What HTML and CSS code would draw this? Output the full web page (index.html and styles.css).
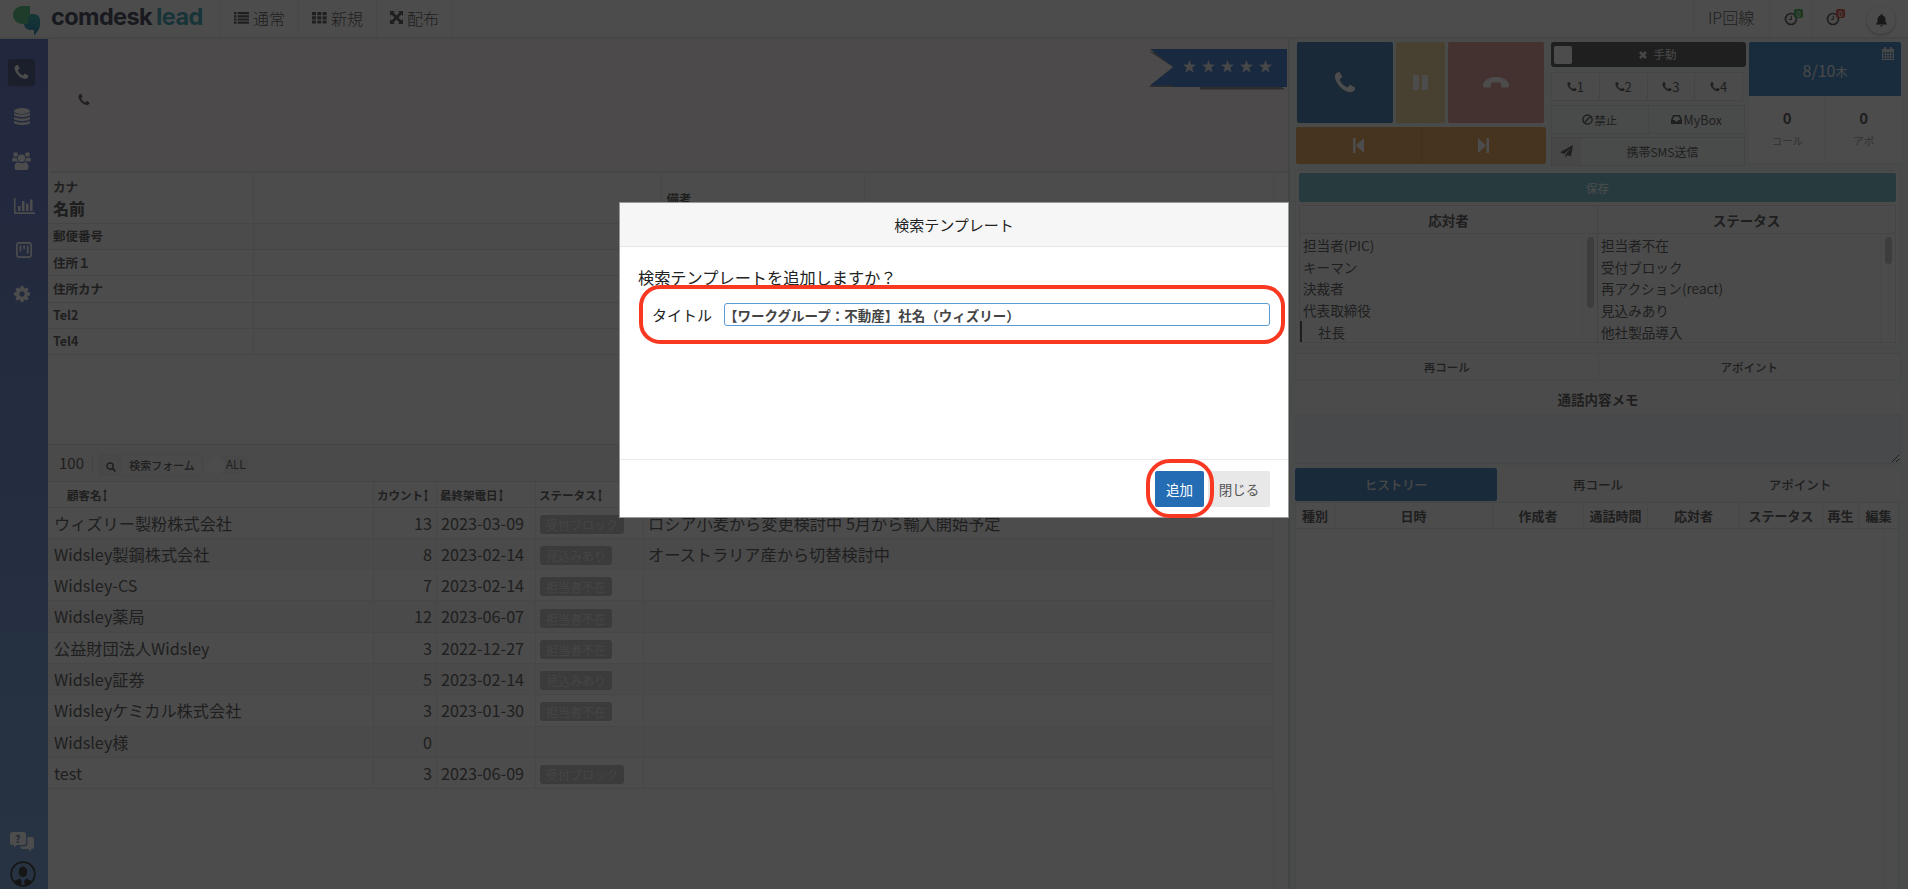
FILE: index.html
```html
<!DOCTYPE html>
<html lang="ja">
<head>
  <meta charset="UTF-8" />
  <title>Comdesk Lead</title>
  <meta name="viewport" content="width=device-width, initial-scale=1" />
  <link rel="stylesheet" href="styles.css">
</head>
<body>

  <svg class="sprite" width="0" height="0">
    <symbol id="i-phone" viewBox="128 128 1536 1536">
      <path d="M1600 1240q0 27-10 70.5t-21 68.5q-21 50-122 106-94 51-186 51-27 0-53-3.5t-57.5-12.5-47-14.5-55.5-20.5-49-18q-98-35-175-83-127-79-264-216t-216-264q-48-77-83-175-3-9-18-49t-20.5-55.5-14.5-47-12.5-57.5-3.5-53q0-92 51-186 56-101 106-122 25-11 68.5-21t70.5-10q14 0 21 3 18 6 53 76 11 19 30 54t35 63.5 31 53.5q3 4 17.5 25t21.5 35.5 7 28.5q0 20-28.5 50t-62 55-62 53-28.5 46q0 9 5 22.5t8.5 20.5 14 24 11.5 19q76 137 174 235t235 174q2 1 19 11.5t24 14 20.5 8.5 22.5 5q18 0 46-28.5t53-62 55-62 50-28.5q14 0 28.5 7t35.5 21.5 25 17.5q25 15 53.5 31t63.5 35 54 30q70 35 76 53 3 7 3 21z"/>
    </symbol>
    <symbol id="i-gear" viewBox="128 128 1536 1536">
      <path d="M1152 896q0-106-75-181t-181-75-181 75-75 181 75 181 181 75 181-75 75-181zm512-109v222q0 12-8 23t-20 13l-185 28q-19 54-39 91 35 50 107 138 10 12 10 25t-9 23q-27 37-99 108t-94 71q-12 0-26-9l-138-108q-44 23-91 38-16 136-29 186-7 28-36 28h-222q-14 0-24.5-8.5t-11.5-21.5l-28-184q-49-16-90-37l-141 107q-10 9-25 9-14 0-25-11-126-114-165-168-7-10-7-23 0-12 8-23 15-21 51-66.5t54-70.5q-27-50-41-99l-183-27q-13-2-21-12.5t-8-23.5v-222q0-12 8-23t19-13l186-28q14-46 39-92-40-57-107-138-10-12-10-24 0-10 9-23 26-36 98.5-107.5t94.5-71.5q13 0 26 10l138 107q44-23 91-38 16-136 29-186 7-28 36-28h222q14 0 24.5 8.5t11.5 21.5l28 184q49 16 90 37l142-107q9-9 24-9 13 0 25 10 129 119 165 170 7 8 7 22 0 12-8 23-15 21-51 66.5t-54 70.5q26 50 41 98l183 28q13 2 21 12.5t8 23.5z"/>
    </symbol>
    <symbol id="i-sort" viewBox="0 0 4 14">
      <path d="M2 0l2 3.2H2.7v7.6H4L2 14 0 10.800h1.300V3.200H0z"/>
    </symbol>
    <symbol id="i-star" viewBox="0 0 12 12">
      <path d="M6 0l1.500 4.100 4.500.200-3.500 2.700 1.200 4.500L6 9l-3.700 2.500 1.200-4.500L0 4.300l4.500-.2z"/>
    </symbol>
    <symbol id="i-clock" viewBox="0 0 14 14">
      <circle cx="7" cy="7" r="5.500" fill="none" stroke="currentColor" stroke-width="1.700"/>
      <path d="M7.300 3.800v3.700H4.800" fill="none" stroke="currentColor" stroke-width="1.200"/>
    </symbol>
  </svg>

  <header class="topbar">
    <div class="logo">
      <svg class="logo-mark" width="28" height="30" viewBox="0 0 28 30">
        <defs>
          <linearGradient id="lg" x1="0" y1="0" x2="0" y2="1">
            <stop offset="0" stop-color="#45b8b4"/>
            <stop offset="1" stop-color="#3f8dbd"/>
          </linearGradient>
        </defs>
        <path d="M17 8h4a6 6 0 0 1 6 6v4c0 5-3 8-6 12v-6h-4a6 6 0 0 1-6-6z" fill="url(#lg)"/>
        <path d="M9 0h8v9a8 8 0 0 1-2 4v5H9A9 9 0 0 1 9 0z" fill="#63c98b"/>
      </svg>
      <span class="logo-name">comdesk</span><span class="logo-lead">lead</span>
    </div>
    <nav class="nav">
      <a class="nav-item">
        <svg width="15" height="12" viewBox="0 0 15 12"><path d="M0 0h2.500v2.200H0zM0 3.200h2.500v2.200H0zM0 6.400h2.500v2.200H0zM0 9.600h2.500v2.200H0zM3.600 0H15v2.200H3.600zM3.600 3.200H15v2.200H3.600zM3.600 6.400H15v2.200H3.600zM3.600 9.600H15v2.200H3.600z"/></svg>
        <span>通常</span>
      </a>
      <a class="nav-item">
        <svg width="15" height="12" viewBox="0 0 15 12"><path d="M0 0h4v3.200H0zM5.300 0h4v3.200h-4zM10.600 0h4v3.200h-4zM0 4.200h4v3.200H0zM5.300 4.200h4v3.200h-4zM10.600 4.200h4v3.200h-4zM0 8.400h4v3.200H0zM5.300 8.400h4v3.200h-4zM10.600 8.400h4v3.200h-4z"/></svg>
        <span>新規</span>
      </a>
      <a class="nav-item">
        <svg width="13" height="13" viewBox="0 0 13 13"><path d="M0 0h5L3.500 1.500l3 3 3-3L8 0h5v5l-1.500-1.500-3 3 3 3L13 8v5H8l1.500-1.500-3-3-3 3L5 13H0V8l1.500 1.500 3-3-3-3L0 5z"/></svg>
        <span>配布</span>
      </a>
    </nav>
    <div class="topbar-right">
      <span class="line-name">IP回線</span>
      <span class="clock"><svg width="14" height="14"><use href="#i-clock"/></svg><b class="count green">0</b></span>
      <span class="clock last"><svg width="14" height="14"><use href="#i-clock"/></svg><b class="count red">0</b></span>
      <span class="bell">
        <svg width="11" height="13" viewBox="0 0 11 13"><path d="M5.500 0c.6 0 1 .4 1 1v.5C8.500 2 9.500 3.500 9.500 5.500V8L11 10v.6H0V10l1.500-2V5.500c0-2 1-3.500 3-4V1c0-.6.4-1 1-1zM4.200 11.200h2.600a1.300 1.300 0 0 1-2.600 0z"/></svg>
      </span>
    </div>
  </header>

  <div class="layout">
    <aside class="sidebar">
      <a class="side-item active"><svg width="15" height="15"><use href="#i-phone"/></svg></a>
      <a class="side-item">
        <svg width="16" height="18" viewBox="0 0 16 18"><ellipse cx="8" cy="3" rx="8" ry="3"/><path d="M0 4.800c2 2.400 14 2.400 16 0v2c-1 3-15 3-16 0zM0 8.800c2 2.400 14 2.400 16 0v2c-1 3-15 3-16 0zM0 12.800c2 2.400 14 2.400 16 0v2c-1 3-15 3-16 0z"/></svg>
      </a>
      <a class="side-item">
        <svg width="19" height="18" viewBox="0 0 19 18"><circle cx="3.600" cy="2.600" r="2.400"/><circle cx="15.400" cy="2.600" r="2.400"/><circle cx="9.500" cy="6.200" r="3.700"/><path d="M2 5.500c1.500.8 2.500.5 3 .3 0 1.800.4 2.900 1.300 3.700H2C.5 9.500 0 8.800 0 8s.5-2.800 2-2.500zM17 5.500c-1.500.8-2.500.5-3 .3 0 1.800-.4 2.900-1.300 3.700H17c1.500 0 2-.7 2-1.500s-.5-2.800-2-2.500zM6 10.200c2 1.400 5 1.400 7 0 2.500 0 3.500 2.500 3.500 5 0 2-1 2.800-2.500 2.800H5c-1.500 0-2.500-.8-2.500-2.800 0-2.500 1-5 3.500-5z"/></svg>
      </a>
      <a class="side-item wide">
        <svg width="21" height="16" viewBox="0 0 21 16"><path d="M0 0h1.500v14.300H21V16H0zM4 8h2.500v5H4zM8 3h2.500v10H8zM12 5.500h2.500V13H12zM16 1.500h2.500V13H16z"/></svg>
      </a>
      <a class="side-item wide">
        <svg width="16" height="16" viewBox="0 0 16 16"><rect x=".9" y=".9" width="14.200" height="14.200" rx="2" fill="none" stroke="currentColor" stroke-width="1.600"/><path d="M3.500 3.500h1.800v6H3.500zM7.200 3.500H9v3.800H7.200zM10.800 3.500h1.800v8h-1.800z"/></svg>
      </a>
      <a class="side-item"><svg width="16" height="16"><use href="#i-gear"/></svg></a>
      <div class="side-bottom">
        <svg width="25" height="19" viewBox="0 0 25 19"><path d="M2.500 0h11A2.500 2.500 0 0 1 16 2.500v8a2.500 2.500 0 0 1-2.500 2.500H7l-3 2.500V13H2.500A2.500 2.500 0 0 1 0 10.500v-8A2.500 2.500 0 0 1 2.500 0z"/><path d="M17.500 5h4A2.500 2.500 0 0 1 24 7.500v7a2.500 2.500 0 0 1-2.500 2.500H21v2.400L18 17h-5.500a2 2 0 0 1-2-2.500h3.500a3.500 3.500 0 0 0 3.500-3.500z"/><text class="help-mark" x="5.300" y="10.500">?</text></svg>
        <svg class="user" width="26" height="26" viewBox="0 0 26 26"><circle cx="13" cy="13" r="11.800" fill="none" stroke="currentColor" stroke-width="1.800"/><ellipse cx="13" cy="10.800" rx="4.300" ry="5.200"/><path d="M4 20c2-1 4-1.500 6-2.500l2 3-1 4c-3-.5-5-2-7-4.500zM22 20c-2-1-4-1.500-6-2.500l-2 3 1 4c3-.5 5-2 7-4.500z"/></svg>
      </div>
    </aside>

    <main class="main">
      <section class="customer-head">
        <svg class="customer-phone" width="12" height="12"><use href="#i-phone"/></svg>
        <div class="ribbon">
          <svg class="ribbon-bg" width="139" height="42" viewBox="0 0 139 42"><path d="M1 3l24 16L1 39h27v-3h110v3H52v2.500h84V40" fill="#999"/><path d="M2 1h137v38H26l-2-1.500H2L25.500 19z" fill="#568cd6"/></svg>
          <div class="stars">
            <svg width="13" height="13"><use href="#i-star"/></svg>
            <svg width="13" height="13"><use href="#i-star"/></svg>
            <svg width="13" height="13"><use href="#i-star"/></svg>
            <svg width="13" height="13"><use href="#i-star"/></svg>
            <svg width="13" height="13"><use href="#i-star"/></svg>
          </div>
        </div>
      </section>

      <section class="detail">
        <div class="detail-row first">
          <div class="d-label"><span>カナ</span><strong>名前</strong></div>
          <div class="d-value"></div>
          <div class="d-label note">備考</div>
          <div class="d-value"></div>
        </div>
        <div class="detail-row alt"><div class="d-label">郵便番号</div><div class="d-value"></div></div>
        <div class="detail-row"><div class="d-label">住所１</div><div class="d-value"></div></div>
        <div class="detail-row"><div class="d-label">住所カナ</div><div class="d-value"></div></div>
        <div class="detail-row"><div class="d-label">Tel2</div><div class="d-value"></div></div>
        <div class="detail-row"><div class="d-label">Tel4</div><div class="d-value"></div></div>
      </section>

      <section class="list-tools">
        <span class="total">100</span>
        <button class="search-btn">
          <span class="search-icon"><svg width="10" height="10" viewBox="0 0 11 11"><circle cx="4.500" cy="4.500" r="3.500" fill="none" stroke="currentColor" stroke-width="1.600"/><path d="M7 7l3.500 3.500" stroke="currentColor" stroke-width="2"/></svg></span>
          <span class="search-label">検索フォーム</span>
        </button>
        <span class="all-toggle"><i></i>ALL</span>
      </section>

      <table class="list">
        <colgroup><col class="c-name"><col class="c-count"><col class="c-date"><col class="c-status"><col></colgroup>
        <thead>
          <tr>
            <th class="th-name">顧客名<svg width="4" height="13"><use href="#i-sort"/></svg></th>
            <th>カウント<svg width="4" height="13"><use href="#i-sort"/></svg></th>
            <th>最終架電日<svg width="4" height="13"><use href="#i-sort"/></svg></th>
            <th>ステータス<svg width="4" height="13"><use href="#i-sort"/></svg></th>
            <th></th>
          </tr>
        </thead>
        <tbody>
          <tr><td>ウィズリー製粉株式会社</td><td class="num">13</td><td>2023-03-09</td><td><span class="tag">受付ブロック</span></td><td>ロシア小麦から変更検討中 5月から輸入開始予定</td></tr>
          <tr><td>Widsley製鋼株式会社</td><td class="num">8</td><td>2023-02-14</td><td><span class="tag">見込みあり</span></td><td>オーストラリア産から切替検討中</td></tr>
          <tr><td>Widsley-CS</td><td class="num">7</td><td>2023-02-14</td><td><span class="tag">担当者不在</span></td><td></td></tr>
          <tr><td>Widsley薬局</td><td class="num">12</td><td>2023-06-07</td><td><span class="tag">担当者不在</span></td><td></td></tr>
          <tr><td>公益財団法人Widsley</td><td class="num">3</td><td>2022-12-27</td><td><span class="tag">担当者不在</span></td><td></td></tr>
          <tr><td>Widsley証券</td><td class="num">5</td><td>2023-02-14</td><td><span class="tag">見込みあり</span></td><td></td></tr>
          <tr><td>Widsleyケミカル株式会社</td><td class="num">3</td><td>2023-01-30</td><td><span class="tag">担当者不在</span></td><td></td></tr>
          <tr><td>Widsley様</td><td class="num">0</td><td></td><td></td><td></td></tr>
          <tr><td>test</td><td class="num">3</td><td>2023-06-09</td><td><span class="tag">受付ブロック</span></td><td></td></tr>
        </tbody>
      </table>
      <div class="list-rest"></div>
    </main>

    <aside class="panel">
      <section class="phone-area">
        <div class="call-col">
          <div class="call-row">
            <button class="call"><svg width="22" height="22"><use href="#i-phone"/></svg></button>
            <button class="pause"><svg width="15" height="15" viewBox="0 0 15 15"><path d="M0 0h6v15H0zM9 0h6v15H9z"/></svg></button>
            <button class="hangup"><svg width="26" height="11" viewBox="0 0 26 11"><path d="M0 7.500C1 2.500 7 0 13 0s12 2.500 13 7.500c.3 2-.4 3-1.500 3H19.500c-1 0-1.500-.8-1.500-2V6.200C16 5 10 5 8 6.200v2.300c0 1.200-.5 2-1.500 2h-5C.4 10.500-.3 9.500 0 7.500z"/></svg></button>
          </div>
          <div class="skip-row">
            <button><svg width="11" height="15" viewBox="0 0 11 15"><path d="M0 0h2.600v15H0zM11 0v15L3 7.500z"/></svg></button>
            <button><svg width="11" height="15" viewBox="0 0 11 15"><path d="M8.400 0H11v15H8.400zM0 0v15l8-7.500z"/></svg></button>
          </div>
        </div>

        <div class="mode-col">
          <div class="mode"><i></i><span><svg width="8" height="8" viewBox="0 0 8 8"><path d="M1 1l6 6M7 1L1 7" stroke="currentColor" stroke-width="2.600"/></svg>手動</span></div>
          <div class="lines">
            <button><svg width="10" height="10"><use href="#i-phone"/></svg>1</button>
            <button><svg width="10" height="10"><use href="#i-phone"/></svg>2</button>
            <button><svg width="10" height="10"><use href="#i-phone"/></svg>3</button>
            <button><svg width="10" height="10"><use href="#i-phone"/></svg>4</button>
          </div>
          <div class="box-row">
            <button><svg width="11" height="11" viewBox="0 0 11 11"><g fill="none" stroke="currentColor" stroke-width="1.500"><circle cx="5.500" cy="5.500" r="4.600"/><path d="M2.300 8.700l6.400-6.400"/></g></svg>禁止</button>
            <button><svg width="11" height="9" viewBox="0 0 11 9"><path fill-rule="evenodd" d="M2 0h7l2 5v4H0V5zM3 1.500L1.700 5h2l.8 1.500h2L7.300 5h2L8 1.500z"/></svg>MyBox</button>
          </div>
          <div class="sms">
            <span class="sms-icon"><svg width="13" height="13" viewBox="0 0 13 13"><path d="M13 0l-2 11.500-3.500-1.500L5.500 13V9.500L11 3 4 9 0 7.200z"/></svg></span>
            <span class="sms-label">携帯SMS送信</span>
          </div>
        </div>

        <div class="day-col">
          <div class="day"><span>8/10<small>木</small></span>
            <svg class="cal" width="12" height="13" viewBox="0 0 12 13"><path fill-rule="evenodd" d="M0 2h2V0h2v2h4V0h2v2h2v11H0zM1 5v1.800h1.800V5zM3.700 5v1.800h1.800V5zM6.400 5v1.800h1.800V5zM9.100 5v1.800H11V5zM1 7.700v1.800h1.800V7.700zM3.700 7.700v1.800h1.800V7.700zM6.400 7.700v1.800h1.800V7.700zM9.100 7.700v1.800H11V7.700zM1 10.400V12h1.800v-1.600zM3.700 10.400V12h1.800v-1.600zM6.400 10.400V12h1.800v-1.600zM9.100 10.400V12H11v-1.600z"/></svg>
          </div>
          <div class="day-stats">
            <div><b>0</b><span>コール</span></div>
            <div><b>0</b><span>アポ</span></div>
          </div>
        </div>
      </section>

      <section class="save-card">
        <button class="save">保存</button>
        <div class="pickers">
          <div class="picker">
            <h3>応対者</h3>
            <ul>
              <li>担当者(PIC)</li>
              <li>キーマン</li>
              <li>決裁者</li>
              <li>代表取締役</li>
              <li class="child">社長</li>
            </ul>
            <div class="scroll"><i class="long"></i></div>
          </div>
          <div class="picker">
            <h3>ステータス</h3>
            <ul>
              <li>担当者不在</li>
              <li>受付ブロック</li>
              <li>再アクション(react)</li>
              <li>見込みあり</li>
              <li>他社製品導入</li>
            </ul>
            <div class="scroll"><i></i></div>
          </div>
        </div>
      </section>

      <section class="again">
        <button>再コール</button>
        <button>アポイント</button>
      </section>

      <section class="memo">
        <h3>通話内容メモ</h3>
        <textarea></textarea>
      </section>

      <div class="tabs">
        <a class="tab on">ヒストリー</a>
        <a class="tab">再コール</a>
        <a class="tab">アポイント</a>
      </div>

      <section class="history">
        <div class="history-head">
          <span>種別</span><span>日時</span><span>作成者</span><span>通話時間</span><span>応対者</span><span>ステータス</span><span>再生</span><span>編集</span>
        </div>
        <div class="history-body"></div>
      </section>
    </aside>
  </div>

  <div class="overlay"></div>

  <div class="modal">
    <div class="modal-head">検索テンプレート</div>
    <div class="modal-body">
      <p>検索テンプレートを追加しますか？</p>
      <div class="field">
        <label for="title">タイトル</label>
        <input id="title" type="text" value="【ワークグループ：不動産】社名（ウィズリー）">
      </div>
    </div>
    <div class="modal-foot">
      <button class="btn primary">追加</button>
      <button class="btn">閉じる</button>
    </div>
    <div class="ring ring-field"></div>
    <div class="ring ring-add"></div>
  </div>

</body>
</html>
```
FILE: styles.css
```css
* {
  box-sizing: border-box;
}

body {
  margin: 0;
  width: 1908px;
  height: 889px;
  overflow: hidden;
  background: #fff;
  color: #6a6a6a;
  font-family: "Noto Sans CJK JP", "Noto Sans", sans-serif;
  font-size: 16px;
  line-height: 1;
}

svg {
  fill: currentColor;
  flex: none;
}

button {
  font-family: inherit;
  margin: 0;
  padding: 0;
  border: none;
  background: none;
  color: inherit;
  display: flex;
  align-items: center;
  justify-content: center;
}

h3 {
  margin: 0;
}

.sprite {
  position: absolute;
}

/* Header */
.topbar {
  display: flex;
  height: 39px;
  border-bottom: 2px solid #e9ebeb;
}

.logo {
  display: flex;
  width: 220px;
  padding-left: 13px;
}

.logo-mark {
  margin-top: 6px;
}

.logo-name, .logo-lead {
  font-family: Inter, sans-serif;
  font-weight: 700;
  font-size: 23.500px;
  line-height: 34px;
  letter-spacing: -0.6px;
  color: #55556b;
  margin-left: 10px;
}

.logo-lead {
  color: #52afbe;
  margin-left: 4px;
}

.nav {
  display: flex;
}

.nav-item {
  display: flex;
  align-items: center;
  width: 78px;
  gap: 4px;
  padding: 0 0 2px 13px;
  border-left: 1px solid #f1f1f1;
  font-weight: 300;
}

.nav-item:last-child {
  width: 77px;
  border-right: 1px solid #f1f1f1;
}

.topbar-right {
  display: flex;
  margin-left: auto;
  margin-right: 13px;
}

.line-name {
  width: 76px;
  padding: 9px 0 0 14px;
  border-left: 1px solid #f1f1f1;
  font-weight: 300;
}

.clock {
  position: relative;
  width: 42px;
  padding: 11px 0 0 14px;
  border-left: 1px solid #f1f1f1;
}

.clock.last {
  width: 56px;
}

.count {
  position: absolute;
  left: 24px;
  top: 9px;
  width: 9px;
  height: 9px;
  border-radius: 2px;
  font-size: 8px;
  font-weight: 400;
  line-height: 9px;
  text-align: center;
  color: #fff;
}

.green {
  background: #5fb864;
}

.red {
  background: #dc6a62;
}

.bell {
  display: flex;
  align-items: center;
  justify-content: center;
  width: 28px;
  height: 28px;
  margin-top: 6px;
  border-radius: 50%;
  box-shadow: 0 1px 3px rgba(0,0,0,0.3);
  color: #555;
}

.layout {
  display: flex;
  height: 850px;
}

/* Sidebar */
.sidebar {
  display: flex;
  flex-direction: column;
  width: 48px;
  padding: 20px 0 0 8px;
  background: linear-gradient(#7182cc, #83ace0);
  color: #fff;
}

.side-item {
  display: flex;
  align-items: center;
  justify-content: center;
  width: 27px;
  height: 27px;
  margin-bottom: 17.400px;
  border-radius: 3px;
}

.side-item.active {
  background: #5a6a92;
}

.side-item.wide {
  width: 32px;
}

.side-bottom {
  display: flex;
  flex-direction: column;
  gap: 10px;
  margin-top: auto;
  padding: 0 0 2px 2px;
}

.help-mark {
  font-size: 10px;
  font-weight: 700;
  fill: #6d86ad;
}

.user {
  color: #4a4a4a;
}

/* Customer */
.main {
  display: flex;
  flex-direction: column;
  width: 1241px;
  border-right: 1px solid #e4e4e4;
}

.customer-head {
  display: flex;
  justify-content: space-between;
  height: 134px;
  margin-left: 2px;
  background: #fdf8f8;
  border-bottom: 2px solid #ececec;
}

.customer-phone {
  margin: 55px 0 0 28px;
}

.ribbon {
  position: relative;
  width: 139px;
  height: 42px;
  margin: 9px 1px 0 0;
}

.stars {
  position: absolute;
  left: 35px;
  top: 12px;
  display: flex;
  gap: 6px;
  color: #eee;
}

.detail {
  width: 1226px;
  height: 271px;
  border-right: 1px solid #f1f1f1;
}

.detail-row {
  display: flex;
  height: 26.200px;
  border-bottom: 1px solid #e8e8e8;
}

.detail-row.first {
  height: 51px;
}

.detail-row.alt {
  background: #fbfbfb;
}

.d-label {
  display: flex;
  align-items: center;
  width: 206px;
  padding-left: 5px;
  border-right: 1px solid #eee;
  font-size: 12.500px;
  font-weight: 700;
}

.first .d-label {
  flex-direction: column;
  align-items: flex-start;
  padding-top: 8px;
  gap: 6px;
}

.d-label strong {
  font-size: 16px;
}

.d-value {
  width: 408px;
}

.first .note {
  width: 204px;
  border-left: 1px solid #eee;
  padding-left: 4px;
  padding-top: 20px;
}

/* Customer list */
.list-tools {
  display: flex;
  align-items: center;
  height: 38px;
  padding: 1px 0 0 11px;
  background: #f7f7f7;
  border-top: 1px solid #e8e8e8;
  border-bottom: 1px solid #e8e8e8;
}

.total {
  width: 34px;
  height: 18px;
  font-size: 15px;
  line-height: 16px;
  border-right: 1px solid #e4e4e4;
}

.search-btn {
  width: 104px;
  height: 22px;
  margin: 2px 4px 0 6px;
  border: 1px solid #ececec;
  font-size: 11px;
  font-weight: 500;
}

.search-icon {
  width: 22px;
  height: 20px;
  padding-top: 4px;
  background: #f0f0f0;
}

.search-label {
  flex: 1;
}

.all-toggle {
  display: flex;
  align-items: center;
  gap: 1px;
  width: 43px;
  height: 19px;
  margin-top: 2px;
  border-radius: 10px;
  background: #f2f2f2;
  font-size: 11.500px;
}

.all-toggle i {
  width: 18px;
  height: 18px;
  border-radius: 50%;
  background: #fdfdfd;
}

.list {
  width: 1226px;
  border-collapse: collapse;
  table-layout: fixed;
  border-right: 1px solid #f1f1f1;
}

.c-name {
  width: 325.500px;
}

.c-count {
  width: 63px;
}

.c-date {
  width: 99px;
}

.c-status {
  width: 108px;
}

.list th {
  height: 25px;
  padding: 2px 0 0 3px;
  text-align: left;
  font-size: 11.500px;
  font-weight: 700;
  border-right: 1px solid #eee;
  border-bottom: 1px solid #e6e6e6;
}

.list th svg {
  vertical-align: -2px;
  margin-left: 1px;
}

.list .th-name {
  padding-left: 19px;
}

.list td {
  height: 31.300px;
  padding: 0 0 0 4px;
  font-size: 16.200px;
  white-space: nowrap;
  border-right: 1px solid #eee;
  border-bottom: 1px solid #eee;
}

.list td:first-child {
  padding-left: 6px;
}

.list tr:nth-child(even) td {
  background: #f7f7f7;
}

.list .num {
  padding: 0 4px 0 0;
  text-align: right;
}

.tag {
  display: inline-block;
  height: 19px;
  margin-top: 3px;
  padding: 0 6px;
  border-radius: 3px;
  background: #c6c6c6;
  color: #f4f4f4;
  font-size: 12px;
  font-weight: 300;
  line-height: 19px;
  vertical-align: middle;
}

.list-rest {
  flex: 1;
  width: 1226px;
  border-right: 1px solid #f1f1f1;
}

/* Right panel */
.panel {
  display: flex;
  flex-direction: column;
  width: 619px;
  padding: 3px 7px 0 6px;
  border-left: 1px solid #e4e8e9;
  background: #f6f9f9;
}

.phone-area {
  display: flex;
  height: 123px;
}

.call-col {
  width: 250px;
}

.call-row {
  display: flex;
  gap: 3px;
  height: 81px;
  padding-left: 1px;
}

.call-row button {
  width: 96px;
  border-radius: 2px;
  color: #fff;
}

.call-row .call {
  background: #5489b8;
}

.call-row .pause {
  width: 49px;
  background: #f2d6a4;
}

.call-row .hangup {
  background: #e4a7a3;
}

.skip-row {
  display: flex;
  height: 37px;
  margin-top: 4px;
  border-radius: 2px;
  background: #eeb068;
  color: #fff;
}

.skip-row button {
  flex: 1;
}

.skip-row button:first-child {
  border-right: 1px solid #dca058;
}

.mode-col {
  width: 195px;
  margin-left: 5px;
}

.mode {
  display: flex;
  align-items: center;
  height: 25px;
  padding: 0 3px;
  border-radius: 3px;
  background: #686868;
  color: #eee;
  font-size: 11.500px;
}

.mode i {
  width: 18px;
  height: 18px;
  border-radius: 2px;
  background: #fff;
}

.mode span {
  flex: 1;
  text-align: center;
}

.mode svg {
  margin-right: 7px;
}

.lines {
  display: flex;
  width: 192px;
  height: 29px;
  margin-top: 5px;
  border: 1px solid #e6e6e6;
  background: #fbfbfb;
}

.lines button {
  flex: 1;
  font-size: 13px;
}

.lines button + button {
  border-left: 1px solid #e6e6e6;
}

.box-row {
  display: flex;
  width: 194px;
  height: 29px;
  margin-top: 4px;
  border: 1px solid #e6e6e6;
}

.box-row button {
  flex: 1;
  gap: 1px;
  font-size: 11.500px;
}

.box-row button + button {
  border-left: 1px solid #e6e6e6;
  font-size: 12.500px;
  gap: 2px;
}

.sms {
  display: flex;
  width: 194px;
  height: 29px;
  margin-top: 3px;
  border: 1px solid #e0e0e0;
  font-size: 12px;
}

.sms-icon {
  width: 29px;
  padding: 7px 8px;
  background: #eee;
}

.sms-label {
  flex: 1;
  line-height: 27px;
  text-align: center;
}

.day-col {
  width: 152px;
  margin-left: 3px;
}

.day {
  position: relative;
  height: 54px;
  border-radius: 2px 2px 0 0;
  background: #5595d0;
  color: #eee;
  font-size: 16px;
  line-height: 56px;
  text-align: center;
}

.day small {
  font-size: 12px;
}

.cal {
  position: absolute;
  right: 7px;
  top: 5px;
}

.day-stats {
  display: flex;
  height: 68px;
  background: #fdfdfd;
  border-bottom: 1px solid #eee;
}

.day-stats div {
  flex: 1;
  display: flex;
  flex-direction: column;
  align-items: center;
  gap: 11px;
  padding-top: 14px;
  padding-left: 1px;
}

.day-stats div + div {
  border-left: 1px solid #eee;
}

.day-stats b {
  font-size: 15px;
}

.day-stats span {
  font-size: 10.500px;
  color: #aaa;
}

/* Save card */
.save-card {
  width: 606px;
  height: 178px;
  margin: 5px 0 0 -1px;
  padding: 2px 4px 4px 3px;
  background: #fcfcfc;
  border: 1px solid #eee;
}

.save {
  width: 597px;
  height: 29px;
  border-radius: 2px;
  background: #82c1d0;
  color: #fff;
  font-size: 11.500px;
}

.pickers {
  display: flex;
  height: 138px;
  margin-top: 3px;
  border: 1px solid #e6e6e6;
}

.picker {
  position: relative;
  flex: 1;
}

.picker + .picker {
  border-left: 1px solid #e2e2e2;
}

.picker h3 {
  height: 28px;
  border-bottom: 1px solid #e6e6e6;
  font-size: 13.500px;
  line-height: 29px;
  text-align: center;
}

.picker ul {
  margin: 0;
  padding: 0;
  list-style: none;
  font-size: 13.600px;
}

.picker li {
  height: 21.700px;
  padding-left: 3px;
  line-height: 22px;
}

.picker .child {
  padding-left: 16px;
  border-left: 2px solid #666;
}

.scroll {
  position: absolute;
  right: 0;
  top: 28px;
  width: 15px;
  height: 108px;
  padding: 3px 3px 0 4px;
  border-left: 1px solid #f1f1f1;
  background: #fafafa;
}

.scroll i {
  display: block;
  height: 27px;
  border-radius: 4px;
  background: #ccc;
}

.scroll .long {
  height: 71px;
}

.again {
  display: flex;
  width: 606px;
  height: 27px;
  margin: 5px 0 0 -1px;
  border: 1px solid #ebebeb;
  background: #fafafa;
}

.again button {
  flex: 1;
  font-size: 11.500px;
  font-weight: 500;
}

.again button + button {
  border-left: 1px solid #ebebeb;
}

.memo {
  width: 606px;
  height: 79px;
  margin: 5px 0 0 -1px;
  background: #fcfcfc;
}

.memo h3 {
  height: 29px;
  font-size: 13.500px;
  line-height: 29px;
  text-align: center;
}

.memo textarea {
  display: block;
  width: 606px;
  height: 50px;
  border: 1px solid #e6eaee;
  border-radius: 0;
  background: #f0f3f7;
}

.tabs {
  display: flex;
  width: 606px;
  height: 33px;
  margin: 4px 0 0 -1px;
  background: #fafafa;
  font-size: 12.500px;
  font-weight: 500;
}

.tab {
  flex: 1;
  line-height: 33px;
  text-align: center;
}

.tab.on {
  border-radius: 2px;
  background: #5590c2;
  color: #eee;
}

.history {
  display: flex;
  flex-direction: column;
  flex: 1;
  width: 604px;
  margin: 1px 0 0 -1px;
  border: 1px solid #eee;
  border-bottom: none;
  background: #fdfdfd;
}

.history-head {
  display: grid;
  grid-template-columns: 38px 158px 91px 64px 92px 83px 36px 1fr;
  height: 26px;
  border-bottom: 1px solid #e8e8e8;
  font-size: 13px;
  font-weight: 700;
  line-height: 26px;
  text-align: center;
}

.history-head span + span {
  border-left: 1px solid #eee;
}

.history-body {
  flex: 1;
  width: 588px;
  border-right: 1px solid #f1f1f1;
}

/* Modal */
.overlay {
  position: fixed;
  inset: 0;
  background: rgba(0,0,0,0.7);
}

.modal {
  position: fixed;
  left: 619px;
  top: 202px;
  width: 670px;
  height: 316px;
  display: flex;
  flex-direction: column;
  border: 1px solid #999;
  background: #fff;
  color: #222;
}

.modal-head {
  height: 44px;
  background: #f6f6f6;
  border-bottom: 1px solid #e6e6e6;
  font-size: 15px;
  line-height: 44px;
  text-align: center;
}

.modal-body {
  flex: 1;
  padding: 22px 18px 0 18px;
}

.modal-body p {
  margin: 0;
  font-size: 16.200px;
  line-height: 16px;
}

.field {
  display: flex;
  align-items: center;
  margin-top: 18px;
  padding-left: 14px;
}

.field label {
  width: 72px;
  font-size: 15px;
}

.field input {
  flex: 1;
  height: 23px;
  padding: 0;
  border: 1px solid #5b9bd5;
  border-radius: 3px;
  outline: none;
  color: #444;
  font-family: inherit;
  font-size: 13.500px;
  font-weight: 700;
  text-indent: -1px;
}

.modal-foot {
  display: flex;
  justify-content: flex-end;
  gap: 4px;
  height: 58px;
  padding: 11px 18px 0 0;
  border-top: 1px solid #eaeaea;
}

.btn {
  width: 62px;
  height: 36px;
  border-radius: 2px;
  background: #e8e8e8;
  color: #555;
  font-size: 13.500px;
}

.btn.primary {
  width: 49px;
  background: #246cb3;
  color: #fff;
}

.ring {
  position: absolute;
  border: 4px solid #f93822;
}

.ring-field {
  left: 19px;
  top: 82px;
  width: 646px;
  height: 59px;
  border-radius: 21px;
}

.ring-add {
  left: 526px;
  top: 256px;
  width: 68px;
  height: 59px;
  border-radius: 24px;
}
```
